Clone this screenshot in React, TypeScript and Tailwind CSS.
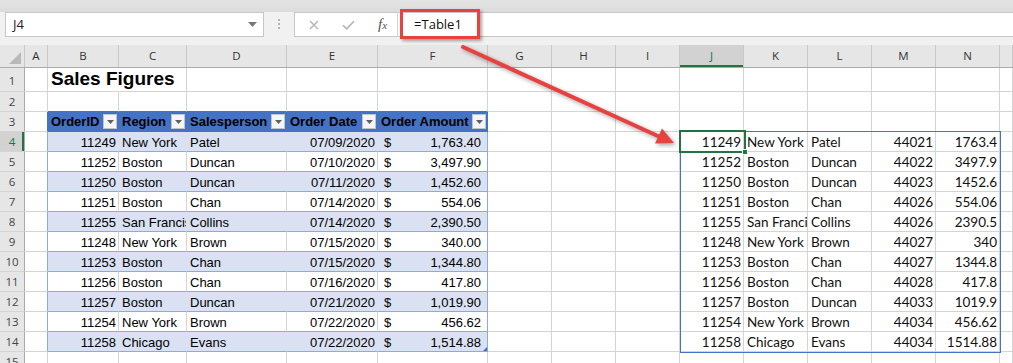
import React from 'react';

const GRID =
  'grid grid-cols-[25px_23px_71px_68px_100px_91px_110px_64px_64px_64px_64px_64px_64px_64px_64px_13px]';

const LETTERS = ['A', 'B', 'C', 'D', 'E', 'F', 'G', 'H', 'I', 'J', 'K', 'L', 'M', 'N', ''];

type Row = {
  id: string;
  region: string;
  person: string;
  date: string;
  amount: string;
  serial: string;
  raw: string;
};

const DATA: Row[] = [
  { id: '11249', region: 'New York', person: 'Patel', date: '07/09/2020', amount: '1,763.40', serial: '44021', raw: '1763.4' },
  { id: '11252', region: 'Boston', person: 'Duncan', date: '07/10/2020', amount: '3,497.90', serial: '44022', raw: '3497.9' },
  { id: '11250', region: 'Boston', person: 'Duncan', date: '07/11/2020', amount: '1,452.60', serial: '44023', raw: '1452.6' },
  { id: '11251', region: 'Boston', person: 'Chan', date: '07/14/2020', amount: '554.06', serial: '44026', raw: '554.06' },
  { id: '11255', region: 'San Francisco', person: 'Collins', date: '07/14/2020', amount: '2,390.50', serial: '44026', raw: '2390.5' },
  { id: '11248', region: 'New York', person: 'Brown', date: '07/15/2020', amount: '340.00', serial: '44027', raw: '340' },
  { id: '11253', region: 'Boston', person: 'Chan', date: '07/15/2020', amount: '1,344.80', serial: '44027', raw: '1344.8' },
  { id: '11256', region: 'Boston', person: 'Chan', date: '07/16/2020', amount: '417.80', serial: '44028', raw: '417.8' },
  { id: '11257', region: 'Boston', person: 'Duncan', date: '07/21/2020', amount: '1,019.90', serial: '44033', raw: '1019.9' },
  { id: '11254', region: 'New York', person: 'Brown', date: '07/22/2020', amount: '456.62', serial: '44034', raw: '456.62' },
  { id: '11258', region: 'Chicago', person: 'Evans', date: '07/22/2020', amount: '1,514.88', serial: '44034', raw: '1514.88' },
];

const HEADERS = ['OrderID', 'Region', 'Salesperson', 'Order Date', 'Order Amount'];

function FilterBtn() {
  return (
    <span className="ml-auto mr-[1px] flex h-[15px] w-[14px] shrink-0 items-center justify-center border border-[#c4c4c4] bg-[#f5f5f5]">
      <svg width="7" height="4" viewBox="0 0 7 4">
        <path d="M0 0h7L3.5 4z" fill="#606060" />
      </svg>
    </span>
  );
}

function Cell({ r, c }: { r: number; c: number }) {
  // c: 0 = A ... 13 = N, 14 = extra
  let border = 'border-r-[#d4d4d4] border-b-[#d4d4d4]';
  let bg = '';
  let content: React.ReactNode = null;
  let layout = 'items-end pb-[1px]';
  let extra = 'overflow-hidden';

  const inLeft = c >= 1 && c <= 5 && r >= 3 && r <= 14;
  const inRight = c >= 9 && c <= 13 && r >= 4 && r <= 14;

  if (r === 1 && c === 1) {
    border = 'border-r-white border-b-[#d4d4d4]';
    extra = 'overflow-visible relative z-10';
    layout = 'items-end pb-[1px]';
    content = (
      <span className="pl-[3px] text-[19px] font-bold leading-[22px]">Sales Figures</span>
    );
  } else if (r === 2 && c >= 1 && c <= 5) {
    border = 'border-r-[#d4d4d4] border-b-[#4472c4]';
  } else if (c === 0 && r >= 3 && r <= 14) {
    border = r === 3 ? 'border-r-[#4472c4] border-b-[#d4d4d4]' : 'border-r-[#8ea9db] border-b-[#d4d4d4]';
  } else if (inLeft) {
    if (r === 3) {
      bg = 'bg-[#4472c4]';
      border = 'border-r-[#4472c4] border-b-[#4472c4]';
      layout = 'items-center';
      content = (
        <>
          <span className="pl-[3px] text-[13px] font-bold leading-[15px]">{HEADERS[c - 1]}</span>
          <FilterBtn />
        </>
      );
    } else {
      const band = r % 2 === 0;
      const d = DATA[r - 4];
      bg = band ? 'bg-[#d9e1f2]' : '';
      if (c === 5) border = 'border-r-[#8ea9db] border-b-[#8ea9db]';
      else if (band) border = 'border-r-[#d9e1f2] border-b-[#8ea9db]';
      else border = 'border-r-[#d4d4d4] border-b-[#8ea9db]';
      const t = 'text-[13px] leading-[15px]';
      if (c === 1) content = <span className={`ml-auto pr-[2px] ${t}`}>{d.id}</span>;
      if (c === 2) content = <span className={`pl-[3px] ${t}`}>{d.region}</span>;
      if (c === 3) content = <span className={`pl-[3px] ${t}`}>{d.person}</span>;
      if (c === 4) content = <span className={`ml-auto pr-[2px] ${t}`}>{d.date}</span>;
      if (c === 5)
        content = (
          <>
            <span className={`pl-[6px] ${t}`}>$</span>
            <span className={`ml-auto pr-[6px] ${t}`}>{d.amount}</span>
          </>
        );
      if (c === 5 && r === 14) {
        extra = 'overflow-hidden relative';
      }
    }
  } else if (inRight) {
    const d = DATA[r - 4];
    const t = "font-['Lato',sans-serif] text-[13.5px] leading-[16px] text-[#111]";
    layout = 'items-end pb-[1px]';
    if (c === 9) content = <span className={`ml-auto pr-[2px] ${t}`}>{d.id}</span>;
    if (c === 10) content = <span className={`pl-[3px] ${t}`}>{d.region}</span>;
    if (c === 11) content = <span className={`pl-[3px] ${t}`}>{d.person}</span>;
    if (c === 12) content = <span className={`ml-auto pr-[2px] ${t}`}>{d.serial}</span>;
    if (c === 13) content = <span className={`ml-auto pr-[2px] ${t}`}>{d.raw}</span>;
  }

  return (
    <div className={`flex whitespace-nowrap border-b border-r ${border} ${bg} ${layout} ${extra}`}>
      {content}
      {c === 5 && r === 14 && (
        <svg className="absolute bottom-0 right-0" width="4" height="4" viewBox="0 0 4 4">
          <path d="M4 0V4H0z" fill="#4472c4" />
        </svg>
      )}
    </div>
  );
}

function GridRow({ r }: { r: number }) {
  const selected = r === 4;
  const h = r === 1 ? 'h-[24px]' : 'h-[20px]';
  const rowHead = selected
    ? 'bg-[#d2d2d2] text-[#217346] shadow-[inset_-2px_0_0_#217346]'
    : 'bg-[#e6e6e6] text-[#444]';
  return (
    <div className={`${GRID} ${h}`}>
      <div
        className={`flex items-center justify-center border-b border-r border-b-[#d4d4d4] border-r-[#ababab] font-['Open_Sans',sans-serif] text-[11.5px] ${rowHead} ${r === 1 ? 'pt-[3px]' : ''}`}
      >
        {r}
      </div>
      {LETTERS.map((_, c) => (
        <Cell key={c} r={r} c={c} />
      ))}
    </div>
  );
}

export default function App() {
  const rows = Array.from({ length: 15 }, (_, i) => i + 1);
  return (
    <div className="relative h-[363px] w-[1013px] overflow-hidden bg-white font-['Liberation_Sans',Arial,sans-serif] text-black">
      {/* top band */}
      <div className="h-[12px] bg-gradient-to-b from-[#e3e3e3] to-[#dcdcdc]" />
      {/* formula bar */}
      <div className="flex h-[33px] items-start bg-[#f1f1f1]">
        <div className="ml-[5px] flex h-[25px] w-[259px] items-center border border-[#c6c6c6] bg-white pl-[7px] pr-[6px]">
          <span className="font-['Open_Sans',sans-serif] text-[13px] text-[#222]">J4</span>
          <svg className="ml-auto" width="9" height="5" viewBox="0 0 9 5">
            <path d="M0 0h9L4.5 5z" fill="#777" />
          </svg>
        </div>
        <div className="flex w-[30px] flex-col items-center gap-[2px] pt-[7px]">
          <span className="h-[2px] w-[2px] bg-[#b4b4b4]" />
          <span className="h-[2px] w-[2px] bg-[#b4b4b4]" />
          <span className="h-[2px] w-[2px] bg-[#b4b4b4]" />
        </div>
        <div className="flex h-[25px] flex-1 items-center border border-r-0 border-[#c6c6c6] bg-white">
          <svg className="ml-[14px]" width="10" height="10" viewBox="0 0 10 10">
            <path d="M1 1L9 9M9 1L1 9" stroke="#b3b3b3" strokeWidth="1.4" />
          </svg>
          <svg className="ml-[23px]" width="13" height="10" viewBox="0 0 13 10">
            <path d="M1 5.2L4.6 8.8L12 1.2" stroke="#b3b3b3" strokeWidth="1.6" fill="none" />
          </svg>
          <span className="ml-[23px] flex items-baseline font-['Liberation_Serif',serif] italic text-[#555]">
            <span className="text-[15px] leading-none">f</span>
            <span className="text-[11px] leading-none">x</span>
          </span>
          <span className="ml-[10px] h-[25px] w-[1px] bg-[#d4d4d4]" />
          <span className="ml-[16px] font-['Open_Sans',sans-serif] text-[13px] text-[#111]">=Table1</span>
        </div>
      </div>

      {/* column headers */}
      <div className={`${GRID} h-[23px] border-b border-[#ababab] bg-[#e6e6e6]`}>
        <div className="relative border-r border-[#c8c8c8]">
          <svg className="absolute bottom-[3px] right-[3px]" width="12" height="12" viewBox="0 0 12 12">
            <path d="M12 0V12H0z" fill="#b9b9b9" />
          </svg>
        </div>
        {LETTERS.map((l, i) => (
          <div
            key={i}
            className={`flex items-center justify-center border-r border-[#c8c8c8] font-['Open_Sans',sans-serif] text-[11.5px] ${
              l === 'J' ? 'bg-[#d2d2d2] text-[#217346] shadow-[inset_0_-2px_0_#217346]' : 'text-[#333]'
            }`}
          >
            {l}
          </div>
        ))}
      </div>

      {/* grid */}
      {rows.map((r) => (
        <GridRow key={r} r={r} />
      ))}

      {/* spill range border J4:N14 */}
      <div className="pointer-events-none absolute left-[680px] top-[131px] h-[222px] w-[321px] border border-[#4472c4]" />
      {/* active cell J4 */}
      <div className="pointer-events-none absolute left-[679px] top-[130px] h-[23px] w-[67px] border-2 border-[#217346]" />
      <div className="pointer-events-none absolute left-[742px] top-[149px] h-[6px] w-[6px] border border-white bg-[#217346]" />

      {/* red highlight box */}
      <div className="pointer-events-none absolute left-[400px] top-[9px] h-[30px] w-[80px] border-[3px] border-[#e8413f] shadow-[2px_2px_3px_rgba(0,0,0,0.35)]" />

      {/* arrow */}
      <svg
        className="pointer-events-none absolute left-0 top-0 drop-shadow-[2px_2px_2px_rgba(0,0,0,0.35)]"
        width="1013"
        height="363"
        viewBox="0 0 1013 363"
      >
        <line x1="463" y1="47" x2="660" y2="137" stroke="#e8413f" strokeWidth="4" strokeLinecap="round" />
        <polygon points="674,143 655,143.5 662,128.5" fill="#e8413f" />
      </svg>
    </div>
  );
}
